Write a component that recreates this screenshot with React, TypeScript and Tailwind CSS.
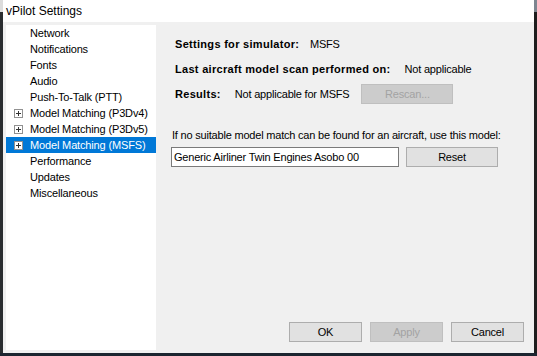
import React from "react";

const items: { label: string; expand?: boolean; selected?: boolean }[] = [
  { label: "Network" },
  { label: "Notifications" },
  { label: "Fonts" },
  { label: "Audio" },
  { label: "Push-To-Talk (PTT)" },
  { label: "Model Matching (P3Dv4)", expand: true },
  { label: "Model Matching (P3Dv5)", expand: true },
  { label: "Model Matching (MSFS)", expand: true, selected: true },
  { label: "Performance" },
  { label: "Updates" },
  { label: "Miscellaneous" },
];

function PlusBox() {
  return (
    <div className="w-[9px] h-[9px] border border-[#919191] bg-white relative flex items-center justify-center">
      <div className="absolute w-[5px] h-[1px] bg-[#333]" />
      <div className="absolute w-[1px] h-[5px] bg-[#333]" />
    </div>
  );
}

function Btn({ children, disabled, w = "w-[73px]" }: { children: React.ReactNode; disabled?: boolean; w?: string }) {
  return (
    <div
      className={
        disabled
          ? `${w} h-[20px] flex items-center justify-center border border-[#bfbfbf] bg-[#cccccc] text-[#a3a3a3]`
          : `${w} h-[20px] flex items-center justify-center border border-[#adadad] bg-[#e1e1e1] text-black`
      }
    >
      {children}
    </div>
  );
}

export default function App() {
  return (
    <div
      className="w-[537px] h-[356px] flex flex-col bg-[#1c232d] text-[11px] text-black"
      style={{ fontFamily: '"Liberation Sans", Arial, sans-serif' }}
    >
      <div className="flex h-[353px]">
        <div className="w-[3px] flex flex-col">
          <div className="h-[12px] bg-[#dcdcdc]" />
          <div className="flex-1 bg-[#2a2d30]" />
        </div>
        <div className="w-[531px] flex flex-col">
          <div className="h-[22px] bg-white flex items-center pl-[3px] text-[12px] text-black">
            vPilot Settings
          </div>
          <div className="flex-1 bg-[#f0f0f0] flex pl-[3px] pt-[3px] pb-[3px]">
            <div className="w-[150px] shrink-0 bg-white flex flex-col text-[11px] tracking-[-0.15px]">
              {items.map((it) => (
                <div
                  key={it.label}
                  className={`h-[16px] flex items-center whitespace-nowrap ${it.selected ? "bg-[#0078d7] text-white" : ""}`}
                >
                  <div className="w-[24px] shrink-0 flex items-center pl-[8px]">{it.expand ? <PlusBox /> : null}</div>
                  <span className="whitespace-nowrap">{it.label}</span>
                </div>
              ))}
            </div>
            <div className="flex-1 flex flex-col pl-[15px] pr-[10px] pt-[9px] pb-[8px] tracking-[-0.2px]">
              <div className="h-[20px] flex items-center pl-[4px]">
                <span className="w-[135px] font-bold tracking-[0.3px]">Settings for simulator:</span>
                <span>MSFS</span>
              </div>
              <div className="h-[20px] mt-[5px] flex items-center pl-[4px] gap-[14px]">
                <span className="font-bold tracking-[0.3px]">Last aircraft model scan performed on:</span>
                <span>Not applicable</span>
              </div>
              <div className="h-[20px] mt-[5px] flex items-center pl-[4px]">
                <span className="font-bold tracking-[0.3px]">Results:</span>
                <span className="ml-[14px]">Not applicable for MSFS</span>
                <div className="ml-[12px]">
                  <Btn disabled w="w-[92px]">Rescan...</Btn>
                </div>
              </div>
              <div className="h-[20px] mt-[21px] flex items-center pl-[1px]">
                If no suitable model match can be found for an aircraft, use this model:
              </div>
              <div className="mt-[2px] flex items-center gap-[7px]">
                <div className="w-[228px] h-[20px] bg-white border border-[#7a7a7a] flex items-center pl-[2px]">
                  Generic Airliner Twin Engines Asobo 00
                </div>
                <Btn w="w-[92px]">Reset</Btn>
              </div>
              <div className="mt-auto flex justify-end gap-[8px]">
                <Btn>OK</Btn>
                <Btn disabled>Apply</Btn>
                <Btn>Cancel</Btn>
              </div>
            </div>
          </div>
        </div>
        <div className="w-[3px] flex flex-col">
          <div className="h-[12px] bg-[#7d8590]" />
          <div className="flex-1 bg-[#1e1e1e]" />
        </div>
      </div>
      <div className="flex-1 bg-[#1c2530]" />
    </div>
  );
}
